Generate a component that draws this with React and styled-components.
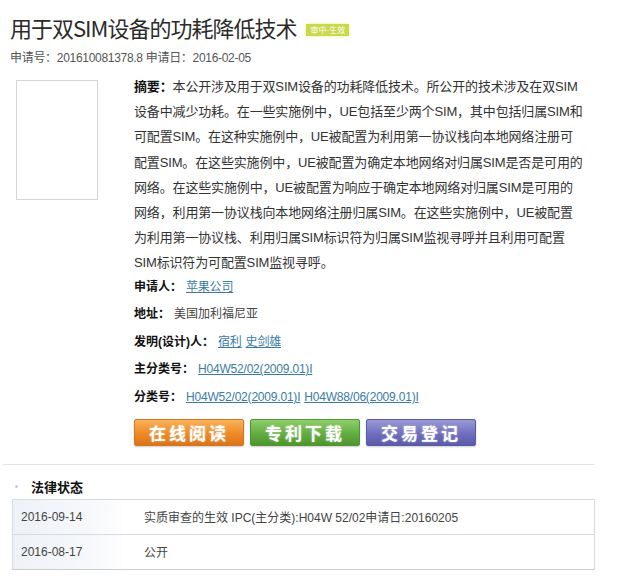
import React from "react";
import styled, { createGlobalStyle } from "styled-components";

const GlobalStyle = createGlobalStyle`
  body {
    margin: 0;
    background: #ffffff;
    font-family: "Liberation Sans", "Noto Sans CJK SC", sans-serif;
    color: #333;
  }
`;

const Page = styled.div`
  width: 631px;
  height: 581px;
  overflow: hidden;
  position: relative;
  background: #fff;
`;

const Header = styled.div`
  padding: 13px 0 0 10px;
`;

const TitleRow = styled.div`
  display: flex;
  align-items: center;
  gap: 10px;
`;

const Title = styled.h1`
  margin: 0;
  font-family: "Noto Sans CJK SC", sans-serif;
  font-size: 22px;
  font-weight: 400;
  line-height: 28px;
  color: #2b2b2b;
  letter-spacing: -1px;
`;

const Badge = styled.span`
  margin-top: 5px;
  padding: 0 4px;
  height: 12px;
  line-height: 12px;
  background: #c9d84c;
  box-shadow: 0 0 3px #e4ee8a;
  color: #fff;
  font-family: "Noto Sans CJK SC", sans-serif;
  font-size: 8px;
`;

const Meta = styled.div`
  margin-top: 7px;
  font-family: "Liberation Sans", "Noto Sans CJK SC", sans-serif;
  font-size: 12px;
  color: #555;
  letter-spacing: -0.3px;
`;

const Main = styled.div`
  display: flex;
  padding: 0 0 0 16px;
  margin-top: 9px;
`;

const Thumb = styled.div`
  width: 80px;
  height: 118px;
  margin-top: 6px;
  border: 1px solid #d4d4d4;
  flex-shrink: 0;
`;

const Content = styled.div`
  margin-left: 36px;
  width: 470px;
`;

const Abstract = styled.p`
  margin: 0;
  font-family: "Liberation Sans", "Noto Sans CJK SC", sans-serif;
  font-size: 13px;
  line-height: 25.2px;
  color: #333;
  white-space: nowrap;
  letter-spacing: -0.15px;
`;

const Bold = styled.b`
  color: #111;
`;

const Fields = styled.div`
  margin-top: -2px;
  display: flex;
  flex-direction: column;
`;

const Field = styled.div`
  height: 27.6px;
  line-height: 27.6px;
  font-family: "Liberation Sans", "Noto Sans CJK SC", sans-serif;
  font-size: 12px;
  color: #444;
`;

const Label = styled.span`
  font-weight: 700;
  color: #111;
  margin-right: 4px;
`;

const Link = styled.a`
  color: #3a7ca5;
  text-decoration: underline;
  margin-right: 4px;
  letter-spacing: -0.2px;
`;

const Buttons = styled.div`
  display: flex;
  gap: 6px;
  margin-top: 7px;
`;

const tones = {
  orange: ["#f8b35a", "#ee8a26", "#d9741a"],
  green: ["#8fcf6b", "#62ad40", "#4f9530"],
  purple: ["#9a9ad6", "#6f6fbe", "#5a5aa8"],
};

const Button = styled.div`
  width: 110px;
  height: 27px;
  border-radius: 2px;
  border: 1px solid ${(p) => tones[p.$tone][2]};
  background: linear-gradient(
    to bottom,
    ${(p) => tones[p.$tone][0]} 0%,
    ${(p) => tones[p.$tone][1]} 55%,
    ${(p) => tones[p.$tone][2]} 100%
  );
  box-shadow: 0 1px 2px rgba(0, 0, 0, 0.2);
  display: flex;
  align-items: center;
  justify-content: center;
  color: #fff;
  font-family: "Noto Sans CJK SC", sans-serif;
  font-size: 17px;
  font-weight: 700;
  letter-spacing: 3px;
  text-shadow: 0 0 2px rgba(255, 255, 255, 0.6);
  box-sizing: border-box;
`;

const Divider = styled.div`
  margin: 18px 36px 0 3px;
  border-top: 1px solid #e2e2e2;
`;

const SectionHead = styled.div`
  display: flex;
  align-items: center;
  padding: 10px 0 0 15px;
  height: 24px;
  font-family: "Noto Sans CJK SC", sans-serif;
  font-size: 13px;
  font-weight: 700;
  color: #111;
`;

const Dot = styled.span`
  width: 3px;
  height: 3px;
  border-radius: 50%;
  background: #ccc;
  margin-right: 13px;
`;

const Table = styled.div`
  margin: 0 36px 0 12px;
  border: 1px solid #d6dbe0;
  border-bottom-color: #c8ccd0;
`;

const Row = styled.div`
  display: grid;
  grid-template-columns: 108px 1fr;
  height: 34px;
  border-top: ${(p) => (p.$first ? "none" : "1px solid #d6dbe0")};
`;

const DateCell = styled.div`
  display: flex;
  align-items: center;
  padding-left: 8px;
  background: linear-gradient(to right, #eef2f7, #f6f8fb 70%, #fdfdfe);
  font-family: "Liberation Sans", sans-serif;
  font-size: 12px;
  color: #444;
`;

const TextCell = styled.div`
  display: flex;
  align-items: center;
  padding-left: 23px;
  font-family: "Liberation Sans", "Noto Sans CJK SC", sans-serif;
  font-size: 12px;
  color: #444;
`;

const abstractLines = [
  "本公开涉及用于双SIM设备的功耗降低技术。所公开的技术涉及在双SIM",
  "设备中减少功耗。在一些实施例中，UE包括至少两个SIM，其中包括归属SIM和",
  "可配置SIM。在这种实施例中，UE被配置为利用第一协议栈向本地网络注册可",
  "配置SIM。在这些实施例中，UE被配置为确定本地网络对归属SIM是否是可用的",
  "网络。在这些实施例中，UE被配置为响应于确定本地网络对归属SIM是可用的",
  "网络，利用第一协议栈向本地网络注册归属SIM。在这些实施例中，UE被配置",
  "为利用第一协议栈、利用归属SIM标识符为归属SIM监视寻呼并且利用可配置",
  "SIM标识符为可配置SIM监视寻呼。",
];

const App = () => {
  return (
    <>
      <GlobalStyle />
      <Page>
        <Header>
          <TitleRow>
            <Title>用于双SIM设备的功耗降低技术</Title>
            <Badge>审中-生效</Badge>
          </TitleRow>
          <Meta>申请号：201610081378.8 申请日：2016-02-05</Meta>
        </Header>

        <Main>
          <Thumb />
          <Content>
            <Abstract>
              {abstractLines.map((line, index) => (
                <React.Fragment key={index}>
                  {index === 0 && <Bold>摘要：</Bold>}
                  {line}
                  {index < abstractLines.length - 1 && <br />}
                </React.Fragment>
              ))}
            </Abstract>

            <Fields>
              <Field>
                <Label>申请人：</Label>
                <Link>苹果公司</Link>
              </Field>
              <Field>
                <Label>地址：</Label>
                美国加利福尼亚
              </Field>
              <Field>
                <Label>发明(设计)人：</Label>
                <Link>宿利</Link>
                <Link>史剑雄</Link>
              </Field>
              <Field>
                <Label>主分类号：</Label>
                <Link>H04W52/02(2009.01)I</Link>
              </Field>
              <Field>
                <Label>分类号：</Label>
                <Link>H04W52/02(2009.01)I</Link>
                <Link>H04W88/06(2009.01)I</Link>
              </Field>
            </Fields>

            <Buttons>
              <Button $tone="orange">在线阅读</Button>
              <Button $tone="green">专利下载</Button>
              <Button $tone="purple">交易登记</Button>
            </Buttons>
          </Content>
        </Main>

        <Divider />
        <SectionHead>
          <Dot />
          法律状态
        </SectionHead>
        <Table>
          <Row $first>
            <DateCell>2016-09-14</DateCell>
            <TextCell>实质审查的生效 IPC(主分类):H04W 52/02申请日:20160205</TextCell>
          </Row>
          <Row>
            <DateCell>2016-08-17</DateCell>
            <TextCell>公开</TextCell>
          </Row>
        </Table>
      </Page>
    </>
  );
};

export default App;
